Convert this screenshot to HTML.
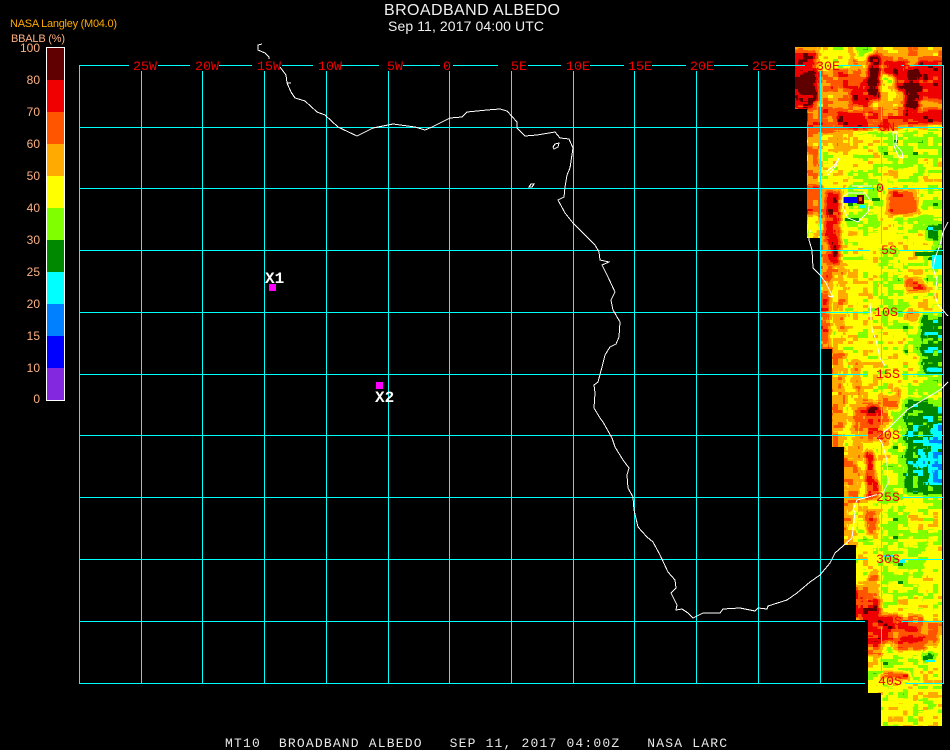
<!DOCTYPE html>
<html><head><meta charset="utf-8"><style>
html,body{margin:0;padding:0;background:#000;width:950px;height:750px;overflow:hidden}
svg{display:block;position:absolute;left:0;top:0}
.c{fill:#484848}.g{fill:#666666}.y{fill:#878787}.Y{fill:#979797}.o{fill:#b2b2b2}.O{fill:#c5c5c5}.r{fill:#dcdcdc}.d{fill:#f3f3f3}
.m{font-family:"Liberation Mono",monospace;font-size:13.33px;fill:#f00000}
.s{font-family:"Liberation Sans",sans-serif;font-size:12px;fill:#ffb080;text-anchor:end}
.t{font-family:"Liberation Sans",sans-serif;fill:#f0f0f0}
.x{font-family:"Liberation Mono",monospace;font-weight:bold;font-size:16px;fill:#fff}
.b{font-family:"Liberation Mono",monospace;font-size:13px;fill:#e8e8e8;white-space:pre}
.w{fill:none;stroke:#fff;stroke-width:1;shape-rendering:crispEdges}
</style></head><body>
<svg width="950" height="750" viewBox="0 0 950 750" xmlns="http://www.w3.org/2000/svg">
<defs>
<clipPath id="cp"><polygon points="795,47 942,47 942,726 881,726 881,693 868,693 868,620 856,620 856,545 844,545 844,447 832,447 832,349 820,349 820,238 807,238 807,109 795,109"/></clipPath>
<filter id="f" filterUnits="userSpaceOnUse" x="780" y="30" width="170" height="710" color-interpolation-filters="sRGB">
<feGaussianBlur in="SourceGraphic" stdDeviation="2.2" result="bl"/>
<feTurbulence type="fractalNoise" baseFrequency=".1 .13" numOctaves="3" seed="7"/>
<feColorMatrix values="1 0 0 0 0 1 0 0 0 0 1 0 0 0 0 0 0 0 0 1" result="n"/>
<feFlood x="780" y="30" width="1" height="1" flood-color="#000"/>
<feComposite width="5" height="3"/>
<feTile result="t"/>
<feComposite in="n" in2="t" operator="in"/>
<feMorphology operator="dilate" radius="2 1" result="p"/>
<feComposite in="bl" in2="p" operator="arithmetic" k1="0" k2="1" k3=".34" k4="-.17"/>
<feComponentTransfer>
<feFuncR type="discrete" tableValues=".52 0 0 0 0 .5 1 1 1 .94 .376"/>
<feFuncG type="discrete" tableValues=".16 0 .5 1 .53 1 1 .67 .33 0 0"/>
<feFuncB type="discrete" tableValues=".88 1 1 1 0 0 0 0 0 0 0"/>
<feFuncA type="linear" slope="0" intercept="1"/>
</feComponentTransfer>
</filter>
</defs>

<!-- satellite data -->
<g clip-path="url(#cp)"><g filter="url(#f)">
<rect class="Y" x="770" y="20" width="200" height="730"/>
<rect class="o" x="780" y="30" width="170" height="80"/>
<rect class="r" x="780" y="50" width="35" height="60"/>
<rect class="d" x="798" y="72" width="20" height="30"/>
<rect class="Y" x="820" y="40" width="30" height="30"/>
<rect class="y" x="855" y="40" width="20" height="20"/>
<rect class="r" x="885" y="60" width="20" height="30"/>
<rect class="r" x="850" y="80" width="20" height="25"/>
<rect class="O" x="830" y="70" width="30" height="20"/>
<rect class="Y" x="880" y="75" width="15" height="30"/>
<rect class="r" x="918" y="60" width="30" height="40"/>
<rect class="d" x="868" y="55" width="12" height="45"/>
<rect class="d" x="905" y="68" width="14" height="45"/>
<rect class="O" x="795" y="109" width="42" height="25"/>
<rect class="r" x="835" y="110" width="30" height="20"/>
<rect class="O" x="865" y="110" width="40" height="20"/>
<rect class="r" x="905" y="110" width="45" height="15"/>
<rect class="Y" x="840" y="130" width="40" height="15"/>
<rect class="o" x="795" y="130" width="25" height="60"/>
<rect class="Y" x="820" y="135" width="60" height="50"/>
<rect class="o" x="835" y="135" width="15" height="15"/>
<rect class="y" x="880" y="130" width="70" height="55"/>
<rect class="Y" x="925" y="160" width="25" height="30"/>
<rect class="y" x="850" y="170" width="30" height="20"/>
<rect class="Y" x="880" y="170" width="30" height="20"/>
<rect class="O" x="795" y="185" width="27" height="55"/>
<rect class="Y" x="795" y="215" width="25" height="25"/>
<rect class="r" x="825" y="190" width="15" height="60"/>
<rect class="y" x="845" y="185" width="40" height="45"/>
<rect class="Y" x="880" y="210" width="15" height="30"/>
<rect class="O" x="888" y="190" width="30" height="25"/>
<rect class="y" x="918" y="190" width="32" height="20"/>
<rect class="y" x="895" y="215" width="55" height="20"/>
<rect class="g" x="925" y="225" width="25" height="15"/>
<rect class="Y" x="895" y="235" width="20" height="10"/>
<rect class="o" x="810" y="240" width="22" height="60"/>
<rect class="O" x="825" y="250" width="8" height="30"/>
<rect class="r" x="830" y="240" width="12" height="25"/>
<rect class="Y" x="840" y="245" width="30" height="55"/>
<rect class="Y" x="845" y="265" width="35" height="100"/>
<rect class="o" x="838" y="265" width="8" height="80"/>
<rect class="y" x="880" y="250" width="25" height="50"/>
<rect class="Y" x="900" y="250" width="15" height="20"/>
<rect class="O" x="905" y="278" width="22" height="14"/>
<rect class="y" x="925" y="255" width="25" height="30"/>
<rect class="g" x="932" y="245" width="18" height="15"/>
<rect class="O" x="810" y="295" width="20" height="55"/>
<rect class="y" x="880" y="300" width="30" height="30"/>
<rect class="o" x="905" y="310" width="15" height="10"/>
<rect class="g" x="920" y="315" width="30" height="55"/>
<rect class="y" x="905" y="330" width="15" height="25"/>
<rect class="o" x="820" y="350" width="25" height="100"/>
<rect class="Y" x="845" y="350" width="8" height="100"/>
<rect class="o" x="853" y="360" width="8" height="90"/>
<rect class="Y" x="861" y="350" width="24" height="50"/>
<rect class="Y" x="885" y="350" width="20" height="30"/>
<rect class="o" x="880" y="395" width="20" height="55"/>
<rect class="O" x="860" y="400" width="22" height="40"/>
<rect class="r" x="868" y="405" width="10" height="20"/>
<rect class="O" x="895" y="388" width="15" height="12"/>
<rect class="y" x="900" y="375" width="15" height="35"/>
<rect class="y" x="918" y="372" width="32" height="25"/>
<rect class="c" x="925" y="368" width="25" height="5"/>
<rect class="y" x="890" y="410" width="15" height="100"/>
<rect class="g" x="905" y="400" width="45" height="95"/>
<rect class="c" x="930" y="425" width="20" height="60"/>
<rect class="c" x="918" y="450" width="8" height="18"/>
<rect class="y" x="925" y="495" width="25" height="15"/>
<rect class="o" x="830" y="450" width="30" height="95"/>
<rect class="Y" x="860" y="445" width="6" height="100"/>
<rect class="r" x="866" y="450" width="8" height="50"/>
<rect class="Y" x="875" y="445" width="15" height="55"/>
<rect class="O" x="870" y="480" width="10" height="20"/>
<rect class="y" x="880" y="465" width="15" height="40"/>
<rect class="Y" x="850" y="510" width="20" height="40"/>
<rect class="y" x="856" y="520" width="20" height="20"/>
<rect class="O" x="866" y="510" width="12" height="25"/>
<rect class="y" x="880" y="510" width="45" height="40"/>
<rect class="Y" x="910" y="510" width="40" height="25"/>
<rect class="y" x="925" y="530" width="25" height="15"/>
<rect class="Y" x="850" y="545" width="30" height="35"/>
<rect class="O" x="850" y="585" width="18" height="35"/>
<rect class="o" x="868" y="570" width="12" height="40"/>
<rect class="y" x="880" y="545" width="45" height="50"/>
<rect class="Y" x="925" y="545" width="25" height="60"/>
<rect class="Y" x="880" y="595" width="60" height="15"/>
<rect class="r" x="860" y="600" width="20" height="20"/>
<rect class="r" x="860" y="615" width="33" height="25"/>
<rect class="O" x="893" y="615" width="30" height="15"/>
<rect class="O" x="893" y="630" width="45" height="20"/>
<rect class="r" x="905" y="625" width="15" height="6"/>
<rect class="r" x="900" y="636" width="25" height="5"/>
<rect class="o" x="920" y="620" width="30" height="15"/>
<rect class="O" x="860" y="640" width="23" height="15"/>
<rect class="y" x="925" y="645" width="25" height="8"/>
<rect class="g" x="922" y="652" width="12" height="8"/>
<rect class="Y" x="860" y="655" width="20" height="35"/>
<rect class="y" x="880" y="655" width="40" height="25"/>
<rect class="Y" x="920" y="660" width="30" height="15"/>
<rect class="O" x="880" y="672" width="30" height="8"/>
<rect class="y" x="860" y="670" width="20" height="15"/>
<rect class="Y" x="870" y="690" width="80" height="50"/>
<rect class="y" x="890" y="692" width="20" height="8"/>
<rect class="y" x="915" y="700" width="20" height="8"/>
</g>
<!-- lake detail -->
<rect x="843" y="197" width="14" height="6" fill="#0000ff"/>
<rect x="857" y="195" width="7" height="9" fill="#600000"/>
<rect x="859" y="197" width="3" height="4" fill="#ff5500"/>
<rect x="860" y="205" width="5" height="3" fill="#00ffff"/>
<rect x="872" y="198" width="8" height="3" fill="#008800"/>
<rect x="845" y="218" width="14" height="3" fill="#008800"/>
<rect x="915" y="252" width="20" height="4" fill="#008800"/>
<rect x="932" y="255" width="10" height="14" fill="#00ffff"/>
<rect x="883" y="555" width="10" height="2" fill="#00ffff"/>
<rect x="900" y="560" width="5" height="3" fill="#00ffff"/>
<rect x="925" y="660" width="10" height="2" fill="#00ffff"/>
</g>

<!-- grid -->
<path fill="none" stroke="#00ffff" stroke-width="1" shape-rendering="crispEdges" d="
M79.5 65V683 M141.5 71V683 M202.5 71V683 M264.5 71V683 M326.5 71V683 M388.5 71V683 M449.5 71V683 M511.5 71V683 M573.5 71V683 M634.5 71V683 M696.5 71V683 M758.5 71V683 M820.5 71V683 M943.5 65V683
M881.5 71V120 M881.5 131V181 M881.5 192V244 M881.5 254V305 M881.5 316V368 M881.5 378V429 M881.5 440V491 M881.5 501V552 M881.5 564V608 M881.5 627V673
M79 65.5H129 M158 65.5H190 M219 65.5H252 M282 65.5H313 M341 65.5H379 M403 65.5H440 M453 65.5H498 M528 65.5H561 M590 65.5H624 M652 65.5H686 M714 65.5H748 M776 65.5H805 M837 65.5H862 M900 65.5H944
M79 127.5H879 M897 127.5H944
M79 188.5H873 M888 188.5H944
M79 250.5H870 M899 250.5H944
M79 312.5H870 M898 312.5H944
M79 374.5H868 M902 374.5H944
M79 435.5H868 M902 435.5H944
M79 497.5H868 M902 497.5H944
M79 559.5H868 M902 559.5H944
M79 621.5H865 M902 621.5H944
M79 683.5H865 M905 683.5H944"/>

<!-- coast -->
<polyline class="w" points="262,44 258,45 258,50 265,53 269,57 269,59"/>
<polyline class="w" points="280,67 286,75 287,83 291,83 287,83 291,92 295,98 305,101 317,112 325,115 338,127 357,136 373,128 393,124 415,127 425,130 432,127 450,118 462,117 467,112 487,110 500,109 507,111 517,122 517,128 525,136 537,135 555,132 560,138 569,139 573,148 570,168 567,175 565,187 564,197 558,200 565,213 573,223 580,230 595,245 599,252 600,260 609,262 602,265 608,277 615,292 611,300 613,310 620,322 619,337 616,344 610,347 605,355 602,367 598,382 594,385 595,393 594,408 600,418 603,422 612,438 615,447 623,460 629,468 627,475 628,488 633,497 634,510 638,527 647,537 653,542 660,555 668,572 675,580 676,588 671,593 677,605 676,610 682,609 688,613 693,618 703,613 720,613 723,609 740,608 755,611 758,608 767,609 768,606 787,600 797,593 810,582 820,575 830,563 835,553 843,546 852,538 855,512 853,510 857,500 883,493 888,483 887,460 882,443 878,437 890,427 907,410 923,400 940,390 948,382"/>
<polygon class="w" points="555,144 559,143 558,147 554,149 553,147"/>
<polygon class="w" points="531,184 534,184 532,187 529,187"/>
<polygon class="w" points="893,132 897,132 896,145 902,152 903,158 899,157 894,146"/>
<polygon class="w" points="839,158 836,166 828,175 827,171 834,166"/>
<polyline class="w" points="852,186 872,186"/>
<polygon class="w" points="843,197 848,193 865,193 870,200 868,212 858,222 848,218 843,208"/>
<polyline class="w" points="810,230 809,240 812,250 813,268 820,275 826,283 833,297 828,296"/>
<polyline class="w" points="948,222 943,232 940,245 935,258 933,268 937,280 935,295 938,305 948,316"/>
<polyline class="w" points="870,303 872,330 876,340 880,358 885,366"/>

<!-- legend -->
<rect x="46" y="47" width="19" height="354" fill="#fff"/>
<rect x="47" y="48" width="17" height="32" fill="#600000"/>
<rect x="47" y="80" width="17" height="32" fill="#f00000"/>
<rect x="47" y="112" width="17" height="32" fill="#ff5500"/>
<rect x="47" y="144" width="17" height="32" fill="#ffaa00"/>
<rect x="47" y="176" width="17" height="32" fill="#ffff00"/>
<rect x="47" y="208" width="17" height="32" fill="#80ff00"/>
<rect x="47" y="240" width="17" height="32" fill="#008800"/>
<rect x="47" y="272" width="17" height="32" fill="#00ffff"/>
<rect x="47" y="304" width="17" height="32" fill="#0080ff"/>
<rect x="47" y="336" width="17" height="32" fill="#0000ff"/>
<rect x="47" y="368" width="17" height="32" fill="#8428e0"/>
<text class="s" x="40" y="52">100</text>
<text class="s" x="40" y="84">80</text>
<text class="s" x="40" y="116">70</text>
<text class="s" x="40" y="148">60</text>
<text class="s" x="40" y="180">50</text>
<text class="s" x="40" y="212">40</text>
<text class="s" x="40" y="244">30</text>
<text class="s" x="40" y="276">25</text>
<text class="s" x="40" y="308">20</text>
<text class="s" x="40" y="340">15</text>
<text class="s" x="40" y="372">10</text>
<text class="s" x="40" y="403">0</text>
<text x="10" y="27" font-family="Liberation Sans,sans-serif" font-size="11" fill="#ffaa00" textLength="107">NASA Langley (M04.0)</text>
<text x="11" y="42" font-family="Liberation Sans,sans-serif" font-size="11" fill="#ffb080" textLength="54">BBALB (%)</text>

<!-- titles -->
<text class="t" x="384" y="15" font-size="16" textLength="176">BROADBAND ALBEDO</text>
<text class="t" x="388" y="31" font-size="14" textLength="156">Sep 11, 2017 04:00 UTC</text>

<!-- grid labels -->
<text class="m" x="133" y="70">25W</text>
<text class="m" x="195" y="70">20W</text>
<text class="m" x="257" y="70">15W</text>
<text class="m" x="318" y="70">10W</text>
<text class="m" x="387" y="70">5W</text>
<text class="m" x="443" y="70">0</text>
<text class="m" x="511" y="70">5E</text>
<text class="m" x="566" y="70">10E</text>
<text class="m" x="628" y="70">15E</text>
<text class="m" x="690" y="70">20E</text>
<text class="m" x="752" y="70">25E</text>
<text class="m" x="816" y="70">30E</text>
<text class="m" x="887" y="70">35E</text>
<text class="m" x="879" y="131">5N</text>
<text class="m" x="876" y="192">0</text>
<text class="m" x="881" y="254">5S</text>
<text class="m" x="874" y="316">10S</text>
<text class="m" x="876" y="378">15S</text>
<text class="m" x="876" y="439">20S</text>
<text class="m" x="876" y="501">25S</text>
<text class="m" x="876" y="563">30S</text>
<text class="m" x="878" y="625">35S</text>
<text class="m" x="878" y="685">40S</text>

<!-- markers -->
<rect x="269" y="284" width="7" height="7" fill="#ff00ff"/>
<rect x="376" y="382" width="7" height="7" fill="#ff00ff"/>
<text class="x" x="265" y="283">X1</text>
<text class="x" x="375" y="402">X2</text>

<text class="b" x="225" y="747" textLength="502" xml:space="preserve">MT10  BROADBAND ALBEDO   SEP 11, 2017 04:00Z   NASA LARC</text>
</svg>
</body></html>
